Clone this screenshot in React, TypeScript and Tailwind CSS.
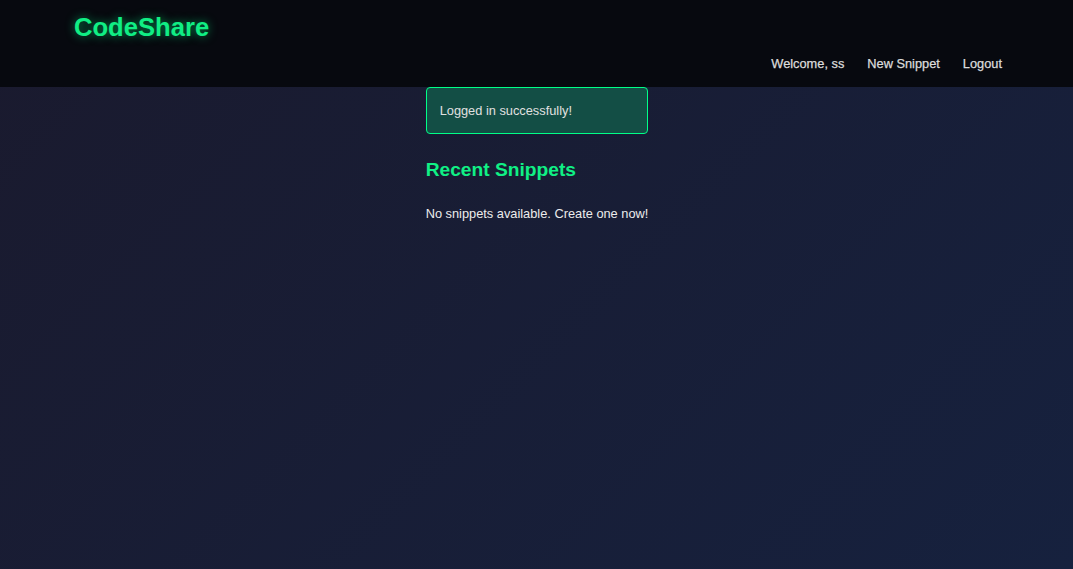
export default function App() {
  const links = ["Welcome, ss", "New Snippet", "Logout"];

  return (
    <div
      className="min-h-screen w-full bg-[linear-gradient(135deg,#1a1a2e,#16213e)] text-[#e0e0e0]"
      style={{ fontFamily: '"Liberation Sans", Arial, sans-serif' }}
    >
      <header className="h-[87px] flex justify-between bg-[#07090f] pl-[74px] pr-[71px]">
        <h1 className="pt-[12px] text-[25.6px] leading-[30px] font-bold text-[#10ee84] [text-shadow:0_0_10px_rgba(0,255,136,0.55)]">
          CodeShare
        </h1>
        <nav className="self-end pb-[14px] flex gap-[23px]">
          {links.map((link) => (
            <a key={link} href="#" className="text-[12.8px] leading-[19px] text-[#dcdcdc] [-webkit-text-stroke:0.25px_#dcdcdc]">
              {link}
            </a>
          ))}
        </nav>
      </header>

      <main className="mx-auto w-fit pl-[1px]">
        <div className="border border-[#00ff88] rounded-[4px] bg-[#134e45] px-[13px] py-[13px] text-[12.8px] leading-[19px] text-[#e0e0e0]">
          Logged in successfully!
        </div>
        <h2 className="mt-[24px] text-[19.2px] leading-[23px] font-bold text-[#10f085]">
          Recent Snippets
        </h2>
        <p className="mt-[23px] text-[12.8px] leading-[19px] text-[#ececec]">
          No snippets available. Create one now!
        </p>
      </main>
    </div>
  );
}
